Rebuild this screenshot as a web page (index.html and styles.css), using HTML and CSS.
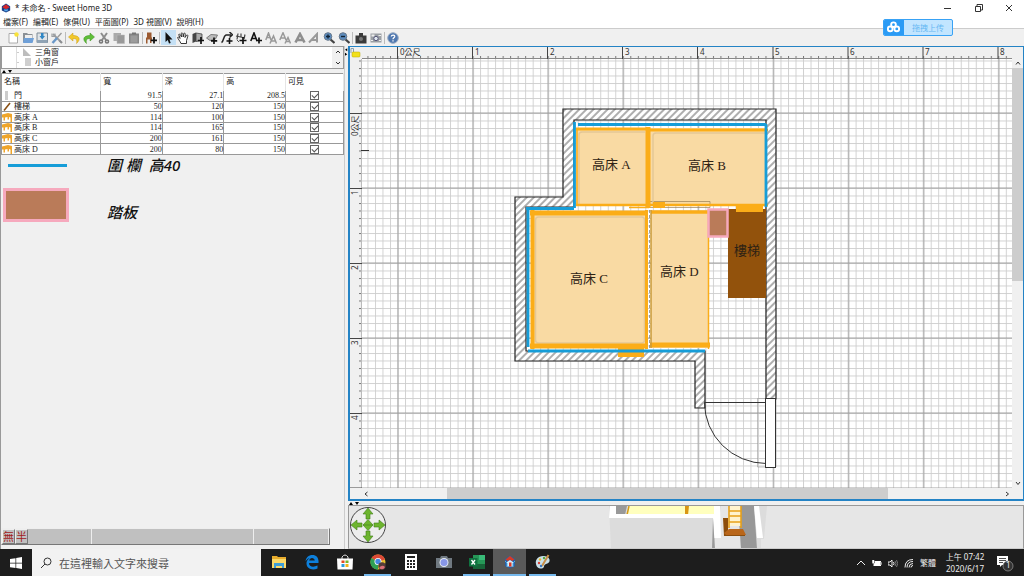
FILE: index.html
```html
<!DOCTYPE html>
<html lang="zh-Hant">
  <head>
    <meta charset="UTF-8" />
    <meta name="viewport" content="width=device-width, initial-scale=1.0" />
    <title>* 未命名 - Sweet Home 3D</title>
    <link rel="stylesheet" href="styles.css">
  </head>
  <body>
    <header class="titlebar">
      <svg class="app-icon" viewBox="0 0 12 12"><path d="M1 4 6 .5 11 4v5l-5 2.500L1 9z" fill="#1d3f86"/><path d="M1.500 5 6 1.500 10.500 5 6 7.500z" fill="#d8282c"/><path d="M4 7l2 1 2-1v3H4z" fill="#55a5e8"/></svg>
      <span class="title">* 未命名 - Sweet Home 3D</span>
      <div class="window-buttons">
        <button aria-label="最小化"><svg viewBox="0 0 10 10"><path d="M2 5.500h7" class="ln"/></svg></button>
        <button aria-label="還原"><svg viewBox="0 0 10 10"><path d="M2.500 3.500h5v5h-5zM4 3.500v-2h5.500V7H7.500" class="ln"/></svg></button>
        <button aria-label="關閉"><svg viewBox="0 0 10 10"><path d="M2 2l6 6M8 2 2 8" class="ln"/></svg></button>
      </div>
    </header>

    <nav class="menubar">
      <button>檔案(F)</button>
      <button>編輯(E)</button>
      <button>傢俱(U)</button>
      <button>平面圖(P)</button>
      <button>3D 視圖(V)</button>
      <button>說明(H)</button>
    </nav>

    <button class="upload">
      <span class="upload-logo"><svg viewBox="0 0 16 14"><g fill="none" stroke="#fff" stroke-width="2"><circle cx="8" cy="4.500" r="2.500"/><circle cx="4.500" cy="9" r="2.500"/><circle cx="11.500" cy="9" r="2.500"/></g></svg></span>
      <span class="upload-text">拖拽上传</span>
    </button>

    <div class="toolbar">
      <div class="tools tools-file">
        <button aria-label="新增"><svg viewBox="0 0 12 12"><path d="M2 1.500h8.500v9.500H2z" fill="#fff" stroke="#999" stroke-width=".8"/><circle cx="9.500" cy="2.500" r="2.200" fill="#f8e23a"/></svg></button>
        <button aria-label="開啟"><svg viewBox="0 0 12 12"><path d="M1 1h4l1 1h4.500v8H1z" fill="#8a9096"/><path d="M3 3h7v3H3z" fill="#eee"/><path d="M2 6h10l-1.500 5H1z" fill="#6fa0d8"/></svg></button>
        <button aria-label="儲存"><svg viewBox="0 0 12 12"><path d="M1 1h10.500v9.500H1z" fill="#dfe3e6" stroke="#7c8a96"/><path d="M1 8h10.500v3H1z" fill="#8fa3b5"/><path d="M5 1h2.500v3H9L6.200 7.500 3.500 4H5z" fill="#2f86c4"/></svg></button>
        <button aria-label="偏好設定"><svg viewBox="0 0 12 12"><path d="M2 2l7 7" stroke="#9a9da0" stroke-width="1.800"/><path d="M1 1.500v3h3v-3" fill="none" stroke="#9a9da0" stroke-width="1.200"/><path d="M10.500 1 6 6" stroke="#999" stroke-width="1.300"/><path d="M6 6l-4.500 5" stroke="#6a98c8" stroke-width="2.500"/><path d="M8.500 8.500 11 11" stroke="#8a8d90" stroke-width="2.200"/></svg></button>
      </div>
      <i class="sep"></i>
      <div class="tools tools-edit">
        <button aria-label="復原"><svg viewBox="0 0 12 12"><path d="M5 1 .5 5 5 9V6.500c3 0 4.500 1 3.500 5C13.500 7 11 3.500 5 3.500z" fill="#f2c82a" stroke="#c99a10" stroke-width=".5"/></svg></button>
        <button aria-label="重做"><svg viewBox="0 0 12 12"><path d="M7 1l4.500 4L7 9V6.500c-3 0-4.500 1-3.500 5C-1.500 7 1 3.500 7 3.500z" fill="#5fbf38" stroke="#3c8f20" stroke-width=".5"/></svg></button>
        <button aria-label="剪下"><svg viewBox="0 0 12 12"><path d="M3 1l5 7M9 1 4 8" stroke="#8c8c8c" stroke-width="2"/><g fill="none" stroke="#777" stroke-width="1.600"><circle cx="3" cy="9.500" r="1.500"/><circle cx="9" cy="9.500" r="1.500"/></g></svg></button>
        <button aria-label="複製"><svg viewBox="0 0 12 12"><path d="M.5 1h7.500v8H.5z" fill="#aaa"/><path d="M4 3h7.500v8.500H4z" fill="#999" stroke="#bbb" stroke-width=".5"/></svg></button>
        <button aria-label="貼上"><svg viewBox="0 0 12 12"><path d="M1 1.500h10v10H1z" fill="#858585"/><path d="M2.500 3.500h7v7h-7z" fill="#9c9c9c"/><path d="M4 .5h4v2H4z" fill="#777"/></svg></button>
      </div>
      <i class="sep"></i>
      <div class="tools tools-add">
        <button aria-label="加入傢俱"><svg viewBox="0 0 12 12"><path d="M2 .5h4.500v5H2zM1 5.500h6v2H1zM1 7.500h1.500v4H1zM5 7.500h1.500v3.500H5z" fill="#9c5a30"/><path d="M9 5v6.500M5.800 8.300h6.200" stroke="#111" stroke-width="1.800"/></svg></button>
      </div>
      <i class="sep"></i>
      <div class="tools tools-plan">
        <button class="active" aria-label="選取"><svg viewBox="0 0 12 12"><path d="M3.500 0v10l2.300-2L7 11.500l1.700-.6L7.500 7.500h3z" fill="#111"/></svg></button>
        <button aria-label="平移"><svg viewBox="0 0 12 12"><path d="M4 11.500C3 9 1 7 .6 5.500c.7-.8 1.500 0 2.600 1L1.700 2.500c.8-.8 1.500 0 1.800.8L4.500 5 4.200 1.300c.8-.9 1.700-.1 1.800.7L6.200 5l.7-3.500c.9-.8 1.600 0 1.400.8L8 5.500l1.600-2.300c1-.5 1.600.3 1.200 1L9.500 8.500v3z" fill="#fff" stroke="#222" stroke-width=".9"/></svg></button>
        <button aria-label="建立牆壁"><svg viewBox="0 0 12 12"><path d="M.5 2 4 .5v9L.5 11z" fill="#444"/><path d="M4 1l6 1v6.500L4 9.500z" fill="#aaa" stroke="#444" stroke-width=".8"/><path d="M9 5v7M5.800 8.500H12" stroke="#111" stroke-width="1.700"/></svg></button>
        <button aria-label="建立房間"><svg viewBox="0 0 12 12"><path d="M.5 6 5 2.500l6.500.5L9.500 7 4 8.500z" fill="#bbb" stroke="#666" stroke-width=".8"/><path d="M8 5.500v6.500M5 8.800h6.200" stroke="#111" stroke-width="1.700"/></svg></button>
        <button aria-label="建立折線"><svg viewBox="0 0 12 12"><path d="M.5 10.500C3 9.500 2 4 5 3h5M8.500 0l3 2.800-3 2.700" fill="none" stroke="#222" stroke-width="1.500"/><path d="M8.500 6v6M5.500 9h6" stroke="#111" stroke-width="1.600"/></svg></button>
        <button aria-label="建立尺寸"><svg viewBox="0 0 12 12"><path d="M1 4l9 2M3 1.500 2 7.500M10 2.500 9 7M6 1.500v4" stroke="#444" stroke-width="1.200"/><path d="M8 5v7M4.500 8.500h7" stroke="#111" stroke-width="1.700"/><path d="M2 8l2 2" stroke="#555"/></svg></button>
        <button aria-label="加入文字"><svg viewBox="0 0 12 12"><path d="M.8 9 4 1l3 8M2 6.500h4" fill="none" stroke="#111" stroke-width="1.600"/><path d="M9 5.500v6M6 8.500h6" stroke="#111" stroke-width="1.700"/></svg></button>
        <button aria-label="放大文字"><svg viewBox="0 0 12 12"><path d="M.8 8 3.500 1 6 8M2 5.500h3M5 11.500 8.500 4l3 7.500M6 9h4" fill="none" stroke="#999" stroke-width="1.500"/></svg></button>
        <button aria-label="縮小文字"><svg viewBox="0 0 12 12"><path d="M.8 8 4 .8 7 8M2 6h4M6 11.500 9 5.500l2.500 6M7 9.500h3" fill="none" stroke="#999" stroke-width="1.500"/></svg></button>
        <button aria-label="粗體"><svg viewBox="0 0 12 12"><path d="M1.500 10.500 6 2l4.500 8.500M3 8h6" fill="none" stroke="#8e8e8e" stroke-width="2.600"/></svg></button>
        <button aria-label="斜體"><svg viewBox="0 0 12 12"><path d="M1 10.500 9 2v8.500M4 8h5" fill="none" stroke="#999" stroke-width="2"/></svg></button>
        <button aria-label="放大"><svg viewBox="0 0 12 12"><path d="M7 7l4.500 4" stroke="#444" stroke-width="2.300"/><circle cx="5" cy="4.500" r="3.800" fill="#5c8cbe" stroke="#68788a" stroke-width="1"/><path d="M5 2.500v4M3 4.500h4" stroke="#123" stroke-width="1.400"/></svg></button>
        <button aria-label="縮小"><svg viewBox="0 0 12 12"><path d="M7 7l4.500 4" stroke="#444" stroke-width="2.300"/><circle cx="5" cy="4.500" r="3.800" fill="#5c8cbe" stroke="#68788a" stroke-width="1"/><path d="M3 4.500h4" stroke="#123" stroke-width="1.400"/></svg></button>
      </div>
      <i class="sep"></i>
      <div class="tools tools-photo">
        <button aria-label="建立照片"><svg viewBox="0 0 12 12"><path d="M.5 3.500H4V1h4v2.500h3.500v8H.5z" fill="#3a3a3a"/><circle cx="6" cy="7" r="2" fill="#777"/></svg></button>
        <button aria-label="建立影片"><svg viewBox="0 0 12 12"><path d="M.5 1.500h11v9H.5z" fill="#9a9fa4"/><path d="M1.500 2.500h3v2h-3z" fill="#eee"/><circle cx="6" cy="6.500" r="2.200" fill="#e0e8f0" stroke="#557"/><path d="M8.500 3.500h2.500M9 8.500h2M1 8.500h2" stroke="#eee"/></svg></button>
      </div>
      <i class="sep"></i>
      <div class="tools tools-help">
        <button aria-label="說明"><svg viewBox="0 0 12 12"><circle cx="6" cy="6" r="5.300" fill="#5078b0" stroke="#9aacc4"/><path d="M4.300 4.500C4.500 2.500 8 2.600 7.700 4.700 7.500 5.800 6 6 6 7.200M6 8.300v1.300" fill="none" stroke="#fff" stroke-width="1.300"/></svg></button>
      </div>
    </div>

    <main class="workspace">
      <section class="left">
        <div class="catalog">
          <ul class="tree">
            <li><svg viewBox="0 0 10 10"><path d="M1 1v8h8z" fill="#bdbdbd"/></svg>三角窗</li>
            <li><svg viewBox="0 0 10 10"><path d="M3 1h6v8H3z" fill="#cfcfcf"/></svg>小窗戶</li>
          </ul>
          <div class="tree-scroll">
            <button aria-label="向上捲動"><svg viewBox="0 0 10 10"><path d="M3 6l2-2 2 2" class="ln"/></svg></button>
            <button aria-label="向下捲動"><svg viewBox="0 0 10 10"><path d="M3 4l2 2 2-2" class="ln"/></svg></button>
          </div>
        </div>
        <div class="splitter"><svg viewBox="0 0 12 4"><path d="M1 4l2-3 2 3zM7 1h4L9 4z"/></svg></div>
        <table class="furniture">
          <thead>
            <tr><th class="col-name">名稱</th><th>寬</th><th>深</th><th>高</th><th class="col-visible">可見</th></tr>
          </thead>
          <tbody>
            <tr><td><svg viewBox="0 0 10 9"><path d="M3 0h3v9H3z" fill="#ccc"/></svg>門</td><td>91.5</td><td>27.1</td><td>208.5</td><td><input type="checkbox" aria-label="門 可見" checked></td></tr>
            <tr><td><svg viewBox="0 0 10 9"><path d="M2 8.500 8 1" stroke="#8a5014" stroke-width="1.600"/></svg>樓梯</td><td>50</td><td>120</td><td>150</td><td><input type="checkbox" aria-label="樓梯 可見" checked></td></tr>
            <tr><td><svg viewBox="0 0 10 9"><path class="bed" d="M0 1.500 6 0l4 1v8H8.500V4.500L7 4v2.500H5.500V4L3 4.500v3H1.500V4.500H0z"/></svg>高床 A</td><td>114</td><td>100</td><td>150</td><td><input type="checkbox" aria-label="高床 A 可見" checked></td></tr>
            <tr><td><svg viewBox="0 0 10 9"><path class="bed" d="M0 1.500 6 0l4 1v8H8.500V4.500L7 4v2.500H5.500V4L3 4.500v3H1.500V4.500H0z"/></svg>高床 B</td><td>114</td><td>165</td><td>150</td><td><input type="checkbox" aria-label="高床 B 可見" checked></td></tr>
            <tr><td><svg viewBox="0 0 10 9"><path class="bed" d="M0 1.500 6 0l4 1v8H8.500V4.500L7 4v2.500H5.500V4L3 4.500v3H1.500V4.500H0z"/></svg>高床 C</td><td>200</td><td>161</td><td>150</td><td><input type="checkbox" aria-label="高床 C 可見" checked></td></tr>
            <tr><td><svg viewBox="0 0 10 9"><path class="bed" d="M0 1.500 6 0l4 1v8H8.500V4.500L7 4v2.500H5.500V4L3 4.500v3H1.500V4.500H0z"/></svg>高床 D</td><td>200</td><td>80</td><td>150</td><td><input type="checkbox" aria-label="高床 D 可見" checked></td></tr>
          </tbody>
        </table>
        <div class="legend">
          <div class="legend-row"><span class="key"><i class="key-rail"></i></span><span>圍 欄&nbsp; 高40</span></div>
          <div class="legend-row legend-step"><span class="key"><i class="key-step"></i></span><span>踏板</span></div>
        </div>
        <div class="ime">
          <button>無</button><button>半</button>
          <span class="ime-a"></span><span class="ime-b"></span><span class="ime-c"></span>
        </div>
      </section>

      <div class="split-vertical"><svg viewBox="0 0 4 12"><path d="M3 1v4L0 3zM0 7l3 2-3 2z"/></svg></div>

      <section class="right">
        <div class="plan">
          <svg class="plan-drawing" role="img" aria-label="平面圖">
            <defs>
              <pattern id="minor" x="47.500" y="66" width="7.510" height="7.500" patternUnits="userSpaceOnUse">
                <path d="M0 .5H7.510M.5 0V7.500" fill="none" stroke="#cdcdcd" stroke-width=".9"/>
              </pattern>
              <pattern id="major" x="10.450" y="28.500" width="75.100" height="75" patternUnits="userSpaceOnUse">
                <path d="M0 37.500H75.100M37.550 0V75" fill="none" stroke="#999" stroke-width=".9"/>
              </pattern>
              <pattern id="ticks-x" x="47.500" y="0" width="7.510" height="12" patternUnits="userSpaceOnUse"><path d="M.5 9v3" stroke="#777" stroke-width="1"/></pattern>
              <pattern id="ticks-y" x="0" y="66" width="12" height="7.500" patternUnits="userSpaceOnUse"><path d="M9 .5h3" stroke="#777" stroke-width="1"/></pattern>
              <pattern id="hatch" width="5" height="5" patternUnits="userSpaceOnUse" patternTransform="rotate(45)">
                <path d="M2 0v5" stroke="#333" stroke-width=".8"/>
              </pattern>
            </defs>

            <rect width="100%" height="100%" fill="#fff"/>
            <rect width="100%" height="100%" fill="url(#minor)"/>
            <rect width="100%" height="100%" fill="url(#major)"/>

            <!-- rulers -->
            <rect width="100%" height="12" fill="#f0f0f0"/>
            <rect width="12" height="100%" fill="#f0f0f0"/>
            <rect x="12" width="100%" height="12" fill="url(#ticks-x)"/>
            <rect y="12" width="12" height="100%" fill="url(#ticks-y)"/>
            <path d="M12 11.500H700" stroke="#888"/>
            <path d="M11.500 12V441" stroke="#bbb"/>
            <path class="tick" d="M47.500 0v12M122.500 0v12M197.500 0v12M272.500 0v12M347.500 0v12M423 0v12M498 0v12M573 0v12M648 0v12M0 66.500h12M0 141.500h12M0 216.500h12M0 291.500h12M0 366.500h12M0 441h12"/>
            <path d="M11 103.500h8" stroke="#333"/>
            <g class="ruler-text">
              <text x="50" y="8">0公尺</text><text x="125" y="8">1</text><text x="200" y="8">2</text><text x="275" y="8">3</text><text x="350" y="8">4</text><text x="425" y="8">5</text><text x="500" y="8">6</text><text x="575" y="8">7</text><text x="650" y="8">8</text>
              <text transform="translate(8 89) rotate(-90)">0公尺</text><text transform="translate(8 148) rotate(-90)">1</text><text transform="translate(8 223) rotate(-90)">2</text><text transform="translate(8 298) rotate(-90)">3</text><text transform="translate(8 373) rotate(-90)">4</text>
            </g>
            <path d="M1 6V1.500h2.500V6" fill="none" stroke="#8aa0b0"/>
            <rect x="2" y="5" width="8" height="5" rx="1" fill="#f2e01c" stroke="#b8a800" stroke-width=".5"/>

            <g transform="translate(-350 -47)">
              <!-- walls -->
              <path d="M563 109H776V399H766V120H574V207H526V351H705V408H695V361H515V197H563z" fill="#fff"/>
              <path d="M563 109H776V399H766V120H574V207H526V351H705V408H695V361H515V197H563z" fill="url(#hatch)" stroke="#222" stroke-width="1.200"/>

              <!-- door -->
              <path d="M757.500 398.500H776V467H757.500z" fill="none" stroke="#999" stroke-width=".6"/>
              <path d="M766 402.500H704.500A62 61 0 0 0 766 463.500" fill="none" stroke="#333"/>
              <rect x="765.500" y="398.500" width="10" height="69" fill="#fff" stroke="#333"/>

              <!-- beds -->
              <g fill="#f9daa3">
                <rect x="576" y="128" width="72" height="78"/>
                <rect x="649" y="128" width="117" height="78"/>
                <rect x="531" y="212" width="116" height="136"/>
                <rect x="651" y="212" width="58" height="136"/>
              </g>
              <path d="M649.500 201.500h60.500v6h-60.500z" fill="none" stroke="#998055" stroke-width=".7"/>
              <g fill="none" stroke="#e3c797" stroke-width="1.500">
                <path d="M579 204v-69q0-3 3-3h63M653 204v-68q0-3 3-3h109M535.500 342V220q0-3 3-3h103q3 0 3 3v120q0 3-3 3h-103q-3 0-3-3"/>
              </g>
              <g fill="none" stroke="#fbad18">
                <path d="M577 129v76" stroke-width="1.500"/>
                <path d="M576 129h72M650 130h118" stroke-width="3"/>
                <path d="M576 205h192" stroke-width="2.500"/>
                <path d="M648 127v81" stroke-width="5"/>
                <path d="M532.500 210v139" stroke-width="4"/>
                <path d="M530 213h118M530 346h118" stroke-width="5"/>
                <path d="M646.500 210v139" stroke-width="3"/>
                <path d="M651 212h57" stroke-width="3.500"/>
                <path d="M650 345h60" stroke-width="5"/>
                <path d="M708.500 212v137M629 207.500h20" stroke-width="1.500"/>
              </g>
              <path d="M651 210v138" stroke="#c99a38" stroke-width="1.500"/>
              <path d="M649.500 210v138" stroke="#777" stroke-width=".7" stroke-dasharray="3 2"/>
              <path d="M653 202h12v6h-12zM618 348h26v9h-26z" fill="#fbad18"/>

              <!-- stairs, steps and rails -->
              <rect x="728" y="209" width="38" height="89" fill="#92520c"/>
              <path d="M736 206h27v6h-27z" fill="#fbad18"/>
              <path d="M578 124.500h188M574.500 122v86M766 124v83M526 208.500h48M528 208v139M528 351h177" fill="none" stroke="#169dd8" stroke-width="2.800"/>
              <rect x="708.500" y="209.500" width="19" height="27" fill="#ba7b59" stroke="#f6a9bd" stroke-width="2.500"/>

              <g class="room-text">
                <text x="592" y="169">高床 A</text>
                <text x="688" y="170">高床 B</text>
                <text x="570" y="283">高床 C</text>
                <text x="660" y="276">高床 D</text>
                <text x="734" y="255">樓梯</text>
              </g>
            </g>
          </svg>
          <div class="scroll-y">
            <button aria-label="向上捲動"><svg viewBox="0 0 10 10"><path d="M3 6.500 5 4l2 2.500" class="ln"/></svg></button>
            <div class="track-y"><i class="thumb-y"></i></div>
            <button aria-label="向下捲動"><svg viewBox="0 0 10 10"><path d="M3 4l2 2.500L7 4" class="ln"/></svg></button>
          </div>
          <div class="scroll-x">
            <button aria-label="向左捲動"><svg viewBox="0 0 10 10"><path d="M6.500 3 4 5l2.500 2" class="ln"/></svg></button>
            <div class="track-x"><i class="thumb-x"></i></div>
            <button aria-label="向右捲動"><svg viewBox="0 0 10 10"><path d="M4 3l2.500 2L4 7" class="ln"/></svg></button>
          </div>
        </div>
        <div class="splitter"><svg viewBox="0 0 12 4"><path d="M1 4l2-3 2 3zM7 1h4L9 4z"/></svg></div>
        <div class="view3d">
          <svg class="compass" viewBox="0 0 38 40">
            <circle cx="19" cy="19" r="17.500" fill="#ededed" stroke="#444" stroke-width="1"/>
            <g fill="#6db52e" stroke="#3f7d18" stroke-width=".6">
              <path d="M19 2l5 6h-3v5h-4V8h-3zM19 36l5-6h-3v-5h-4v5h-3zM2 19l6-5v3h5v4H8v3zM36 19l-6-5v3h-5v4h5v3z"/>
              <path d="M19 13.500l5 5.500-5 5.500-5-5.500z"/>
              <path d="M14 19h10"/>
            </g>
          </svg>
          <svg class="house" viewBox="0 0 160 43">
            <path d="M0 0h158l-3 33h-3v10H2z" fill="#dcdcdc"/>
            <path d="M112 0h22v43h-30z" fill="#e6e6e6"/>
            <path d="M7 0h11l-2 9H7z" fill="#999"/>
            <path d="M19 0h90v9H19z" fill="#ffffbe"/>
            <path d="M18 9l2-9M108 9V0" stroke="#d59a18" stroke-width="1.500"/>
            <path d="M76 0h4l-1 9h-3z" fill="#d99614"/>
            <path d="M1 0h6v8h98V0h6l1 32h-7l-1-20H0z" fill="#fff"/>
            <path d="M104 12l2 31h-3z" fill="#999"/>
            <path d="M129 0h16l3 43h-16z" fill="#989898"/>
            <path d="M145 0h5l4 32h-6z" fill="#fff"/>
            <path d="M114 12h5v15h17v3h-21z" fill="#8d4e0c"/>
            <path d="M115 27l5-4h14l3 6h-20z" fill="#b9661a"/>
            <path d="M121 0h11v20h-12z" fill="#fff3cf"/>
            <path d="M120 0v22M132 0v22M120 5h12M120 10h12M120 16h12" stroke="#e8a11a" stroke-width="1.600"/>
          </svg>
        </div>
      </section>
    </main>

    <footer class="taskbar">
      <button class="start" aria-label="開始"><svg viewBox="0 0 12 12"><path d="M0 2l5.500-.8v4.500H0zM6.200 1 12 0v5.700H6.200zM0 6.400h5.500V11L0 10.200zM6.200 6.400H12V12l-5.800-.9z" fill="#fff"/></svg></button>
      <label class="search">
        <svg viewBox="0 0 12 12"><circle cx="7.500" cy="4.500" r="3.500" class="ln"/><path d="M5 7 1 11" class="ln"/></svg>
        <input type="text" placeholder="在這裡輸入文字來搜尋" aria-label="搜尋">
      </label>
      <div class="apps">
        <button aria-label="檔案總管"><svg viewBox="0 0 16 16"><path d="M1 2h5l1 1h8v11H1z" fill="#e8ac2c"/><path d="M1 5h14v9H1z" fill="#fbd968"/><path d="M3 9h10v5h-2v-2H5v2H3z" fill="#3f9fd6"/></svg></button>
        <button aria-label="Edge"><svg viewBox="0 0 16 16"><path d="M14.500 9H5C5 13 9.500 13.500 13.500 11.500v3C8 17 2.500 14.500 2.500 9.500 2.500 5.500 6 4 6 4 3 4.500 1.500 7.500 1.500 7.500 2 3.500 4.500 1 8.500 1c4 0 6.500 3 6 8zM5.200 6.500h5.600C10.500 3.200 5.700 3 5.200 6.500z" fill="#0d80dc"/></svg></button>
        <button aria-label="Store"><svg viewBox="0 0 16 16"><path d="M5 5V3q3-4 6 0v2" fill="none" stroke="#ddd"/><path d="M0 4.500h16L15.500 15.500H.5z" fill="#fff"/><path d="M4.500 6.500h3V9h-3z" fill="#e54b24"/><path d="M8.500 6.500h3V9h-3z" fill="#75b52c"/><path d="M4.500 10h3v3h-3z" fill="#2a9be0"/><path d="M8.500 10h3v3h-3z" fill="#f3b51c"/></svg></button>
        <button class="running" aria-label="Chrome"><svg viewBox="0 0 16 16"><circle cx="8" cy="8" r="7.500" fill="#e8c12c"/><path d="M8 8 1.500 4A7.500 7.500 0 0 1 15 5.500z" fill="#dc4937"/><path d="M8 8 1.500 4A7.500 7.500 0 0 0 8 15.500z" fill="#2fa055"/><circle cx="8" cy="7.500" r="3.500" fill="#fff"/><circle cx="8" cy="7.500" r="2.700" fill="#4488e0"/><circle cx="12" cy="12" r="3.700" fill="#553d38"/><path d="M9 14q3-4 6-1-2 4-6 1z" fill="#db7078"/></svg></button>
        <button aria-label="小算盤"><svg viewBox="0 0 16 16"><path d="M2 0h12v16H2z" fill="#fff"/><path d="M4 2h8v2H4zM4 6h2v2H4zM7 6h2v2H7zM10 6h2v2h-2zM4 9h2v2H4zM7 9h2v2H7zM10 9h2v2h-2zM4 12h2v2H4zM7 12h2v2H7zM10 12h2v2h-2z" fill="#222"/></svg></button>
        <button aria-label="相機"><svg viewBox="0 0 16 16"><path d="M0 4h4l1-2h6l1 2h4v10H0z" fill="#707981"/><circle cx="8" cy="8.500" r="4.500" fill="#e4e9f1"/><circle cx="8" cy="8.500" r="3.500" fill="#8796e7"/></svg></button>
        <button class="running" aria-label="Excel"><svg viewBox="0 0 16 16"><path d="M4 1h12v14H4z" fill="#269757"/><path d="M10 1h6v5h-6z" fill="#39bb78"/><path d="M4 10h12v5H4z" fill="#176338"/><path d="M0 4h8.500v8.500H0z" fill="#107340"/><path d="M2.500 6l3.500 4.500M6 6l-3.500 4.500" stroke="#fff" stroke-width="1.300"/></svg></button>
        <button class="running current" aria-label="Sweet Home 3D"><svg viewBox="0 0 16 16"><path d="M3 5l5-3.500L13 5v7l-5 2.500L3 12z" fill="#2c5ea3"/><path d="M3.500 5.500 8 2l4.500 3.500L10 7 8 5.500 6 7z" fill="#d73a26"/><path d="M5 8l3-2 3 2v4.500H5z" fill="#d9edfa"/><path d="M7 8.500h2.500v4H7z" fill="#d73a26"/><path d="M3 7l2 2v4M13 7l-2 2v4" stroke="#4bafe8" fill="none"/></svg></button>
        <button class="running" aria-label="小畫家"><svg viewBox="0 0 16 16"><path d="M8 2C3 2 0 6 1 10c1 5 5 5 7 4s0-3 3-4 4-2 3.500-4.500S11 2 8 2z" fill="#c9e0e9"/><path d="M13.500 1 7 12" stroke="#c88e48" stroke-width="2"/><g><circle cx="4" cy="9" r="1.200" fill="#d74036"/><circle cx="5" cy="5.500" r="1.200" fill="#e9b928"/><circle cx="9" cy="4" r="1.200" fill="#52a642"/><circle cx="6" cy="12" r="1.200" fill="#3973bd"/></g></svg></button>
      </div>
      <div class="tray">
        <svg viewBox="0 0 10 10"><path d="M1 7l4-4 4 4" class="lt"/></svg>
        <svg viewBox="0 0 10 10"><path d="M1.500 3h7.500v5H1.500z" fill="#fff"/><path d="M0 2v3q1 2 2.500 0V2M9 4h1v3H9z" fill="#fff" stroke="#1d1d1d" stroke-width=".5"/></svg>
        <svg viewBox="0 0 10 10"><path d="M0 4h2l2-2v7L2 7H0z" class="lt"/><path d="M5.500 4q1 1.500 0 3" class="lt"/><path d="M7 3q2 2.500 0 5M8.500 2q2.500 3.500 0 7" class="lt dim"/></svg>
        <svg viewBox="0 0 10 10"><path d="M1 9.500Q1 1.500 9 1.500M3 9.500q0-6 6-6M5 9.500q0-4 4-4M7 9.500q0-2 2-2" class="lt"/></svg>
        <span class="lang">繁體</span>
        <time class="clock">上午 07:42<br>2020/6/17</time>
        <button class="notice" aria-label="通知"><svg viewBox="0 0 18 18"><path d="M1 2h11v9H6l-2 2v-2H1z" fill="#fff"/><path d="M3 4.500h7M3 6.500h7M3 8.500h4" stroke="#222" stroke-width=".8"/><circle cx="12" cy="12" r="5" fill="#333" stroke="#999" stroke-width=".7"/></svg><span class="badge">1</span></button>
      </div>
    </footer>
  </body>
</html>
```

FILE: styles.css
```css
* {
  box-sizing: border-box;
}
body {
  margin: 0;
  height: 100vh;
  display: flex;
  flex-direction: column;
  overflow: hidden;
  background: #fff;
  color: #222;
  font-family: "Noto Sans", "Noto Sans CJK TC", sans-serif;
  font-size: 8px;
  line-height: 10px;
}
button {
  padding: 0;
  border: 0;
  background: none;
  color: inherit;
  font: inherit;
  display: flex;
  align-items: center;
  justify-content: center;
}
svg {
  display: block;
  flex: none;
}
.ln {
  fill: none;
  stroke: #333;
  stroke-width: 1;
}
.lt {
  fill: none;
  stroke: #eee;
  stroke-width: 1;
}
.dim {
  stroke: #777;
}

/* Title and menus */
.titlebar {
  display: flex;
  align-items: center;
  height: 15px;
  padding-left: 1px;
}
.app-icon {
  width: 10px;
  height: 10px;
  margin-right: 4px;
}
.title {
  flex: 1;
}
.window-buttons {
  display: flex;
}
.window-buttons button {
  width: 31px;
  height: 15px;
}
.window-buttons svg {
  width: 10px;
  height: 10px;
}
.menubar {
  display: flex;
  align-items: center;
  gap: 5px;
  height: 13px;
  padding-left: 3px;
}
.upload {
  position: absolute;
  top: 19px;
  right: 71px;
  width: 70px;
  height: 17px;
  border: 1px solid #38a2f5;
  border-radius: 2px;
  background: #c2e5ff;
  overflow: hidden;
}
.upload-logo {
  width: 20px;
  height: 17px;
  padding: 1px 2px;
  background: #2b9bf5;
}
.upload-logo svg {
  width: 15px;
  height: 14px;
}
.upload-text {
  flex: 1;
  color: #66b8f3;
  font-family: "Noto Sans CJK SC", sans-serif;
}

/* Toolbar */
.toolbar {
  display: flex;
  align-items: center;
  height: 18px;
  padding-left: 6px;
  border-top: 1px solid #ccc;
  background: #f0f0f0;
}
.tools {
  display: flex;
  height: 15px;
}
.tools button {
  flex: 1;
}
.tools svg {
  width: 12px;
  height: 12px;
}
.tools .active {
  background: #c4e0f5;
}
.tools-file {
  width: 58px;
}
.tools-edit {
  width: 74px;
}
.tools-add,
.tools-help {
  width: 14px;
}
.tools-plan {
  width: 190px;
}
.tools-photo {
  width: 29px;
}
.sep {
  width: 1px;
  height: 12px;
  margin: 0 1px;
  background: #bbb;
}

/* Left side */
.workspace {
  display: flex;
  flex: 1;
  min-height: 0;
  background: #f0f0f0;
}
.left {
  display: flex;
  flex-direction: column;
  width: 34%;
  max-width: 345px;
  min-width: 300px;
  border-left: 1px solid #999;
  border-right: 1px solid #ccc;
}
.catalog {
  display: flex;
  height: 23px;
  border: 1px solid #999;
  background: #fff;
}
.tree {
  flex: 1;
  margin: 0 0 0 14px;
  padding: 0;
  border-left: 1px solid #ddd;
  list-style: none;
}
.tree li {
  display: flex;
  align-items: center;
  gap: 3px;
}
.tree li::before {
  content: "";
  width: 2px;
  border-top: 1px solid #ccc;
}
.tree svg {
  width: 10px;
  height: 10px;
}
.tree-scroll {
  display: flex;
  flex-direction: column;
  justify-content: space-between;
  width: 11px;
  background: #f0f0f0;
}
.tree-scroll svg {
  width: 10px;
  height: 10px;
}
.splitter {
  height: 4px;
}
.splitter svg {
  width: 12px;
  height: 4px;
}
.furniture {
  width: 100%;
  height: 82px;
  table-layout: fixed;
  border-collapse: collapse;
  border: 1px solid #999;
  background: #fff;
  font-family: "Liberation Serif", "Noto Sans CJK TC", serif;
}
.furniture th {
  height: 17px;
  padding: 0 2px;
  border-right: 1px solid #e5e5e5;
  font-weight: normal;
  text-align: left;
}
.furniture td {
  height: 10px;
  padding: 0;
  border-right: 1px solid #999;
  border-bottom: 1px solid #999;
  line-height: 9px;
  text-align: right;
}
.furniture td:first-child {
  text-align: left;
}
.furniture td:last-child {
  text-align: center;
}
.furniture td svg {
  display: inline-block;
  width: 10px;
  height: 9px;
  margin-right: 2px;
  vertical-align: top;
}
.furniture input {
  appearance: none;
  display: block;
  width: 9px;
  height: 9px;
  margin: 0 auto;
  border: 1px solid #666;
  background: #fff;
}
.furniture input:checked::before {
  content: "";
  display: block;
  width: 5px;
  height: 3px;
  margin: 1px;
  border: solid #555;
  border-width: 0 0 1px 1px;
  transform: rotate(-45deg);
}
.col-name {
  width: 29%;
}
.col-visible {
  width: 17%;
}
.bed {
  fill: #efa52a;
}
.legend {
  flex: 1;
  color: #111;
  font-size: 15px;
  font-style: italic;
  font-weight: 500;
  line-height: 20px;
}
.legend-row {
  display: flex;
  align-items: center;
}
.legend-step {
  align-items: flex-end;
  margin-top: 13px;
}
.key {
  width: 106px;
  padding-left: 2px;
}
.key-rail {
  display: block;
  width: 59px;
  height: 3px;
  margin-left: 5px;
  background: #169dd8;
}
.key-step {
  display: block;
  width: 66px;
  height: 34px;
  border: 3px solid #f6a9bd;
  background: #ba7b59;
}
.ime {
  display: flex;
  width: 329px;
  max-width: 100%;
  height: 17px;
  margin-bottom: 4px;
  border: 1px solid;
  border-color: #eee #777 #777 #eee;
  background: #c0c0c0;
}
.ime button {
  width: 13px;
  border: 1px solid;
  border-color: #eee #777 #777 #eee;
  color: #a02020;
  font-size: 11px;
}
.ime span {
  border-right: 1px solid #eee;
}
.ime-a {
  flex: 64;
}
.ime-b {
  flex: 162;
}
.ime-c {
  flex: 75;
}
.split-vertical {
  width: 3px;
}
.split-vertical svg {
  width: 3px;
  height: 12px;
}

/* Plan and 3D view */
.right {
  display: flex;
  flex: 1;
  flex-direction: column;
  min-width: 0;
}
.plan {
  display: grid;
  flex: 1;
  grid-template-columns: 1fr 11px;
  grid-template-rows: 1fr 11px;
  min-height: 0;
  border: 2px solid #2483c5;
  border-top-width: 1px;
  border-right-width: 1px;
}
.plan-drawing {
  width: 100%;
  height: 100%;
  overflow: hidden;
}
.tick {
  fill: none;
  stroke: #444;
  stroke-width: 1;
}
.ruler-text {
  fill: #333;
  font-size: 8px;
}
.room-text {
  fill: #2e2214;
  font-family: "Liberation Serif", "Noto Sans CJK TC", serif;
  font-size: 13px;
  font-weight: 400;
}
.scroll-y {
  display: flex;
  flex-direction: column;
  padding-top: 11px;
}
.scroll-y svg,
.scroll-x svg {
  width: 10px;
  height: 10px;
}
.track-y,
.track-x {
  flex: 1;
}
.thumb-y {
  display: block;
  height: 52%;
  background: #cdcdcd;
}
.scroll-x {
  display: flex;
  grid-column: 1 / 3;
  padding: 0 11px;
}
.thumb-x {
  display: block;
  width: 70%;
  height: 100%;
  margin-left: 12%;
  background: #cdcdcd;
}
.view3d {
  display: flex;
  height: 44px;
  border: 1px solid #999;
  border-bottom-color: #ccc;
  background: #e6e6e6;
  overflow: hidden;
}
.compass {
  width: 38px;
  height: 40px;
}
.house {
  width: 160px;
  height: 43px;
  margin-left: 33%;
}

/* Taskbar */
.taskbar {
  display: flex;
  height: 27px;
  background: #1d1d1d;
  color: #eee;
}
.start {
  width: 32px;
}
.start svg {
  width: 12px;
  height: 12px;
}
.search {
  display: flex;
  align-items: center;
  gap: 7px;
  width: 229px;
  padding-left: 8px;
  background: #f2f2f2;
}
.search svg {
  width: 12px;
  height: 12px;
}
.search input {
  flex: 1;
  min-width: 0;
  padding: 0;
  border: 0;
  background: none;
  font-family: "Noto Sans CJK TC", sans-serif;
  font-size: 11px;
}
.search input::placeholder {
  color: #555;
}
.apps {
  display: flex;
  flex: 1;
  padding-left: 1px;
}
.apps button {
  width: 27px;
  margin: 0 3px;
  border-bottom: 2px solid transparent;
}
.apps svg {
  width: 16px;
  height: 16px;
}
.apps .running {
  border-bottom-color: #76b9ed;
}
.apps .current {
  width: 33px;
  margin: 0;
  background: #5a5a5a;
}
.tray {
  display: flex;
  align-items: center;
  gap: 6px;
}
.tray > svg {
  width: 10px;
  height: 10px;
}
.clock {
  width: 46px;
  line-height: 12px;
  text-align: center;
}
.notice {
  position: relative;
  width: 18px;
  height: 27px;
  margin: 0 10px 0 2px;
}
.notice svg {
  width: 18px;
  height: 18px;
}
.badge {
  position: absolute;
  top: 11px;
  left: 10px;
}
```
